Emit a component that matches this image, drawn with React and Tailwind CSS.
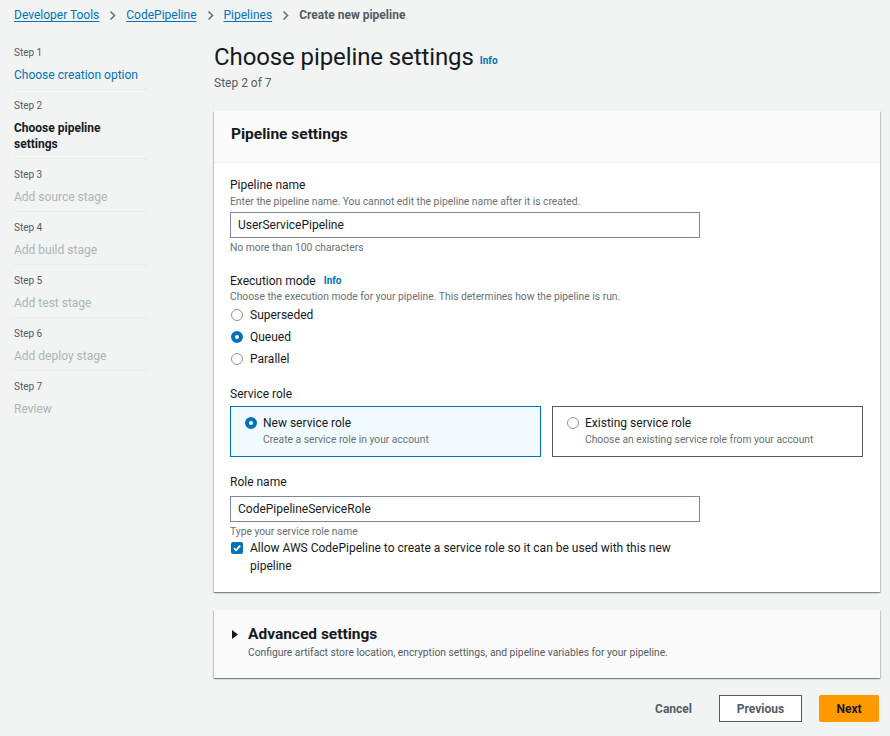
import React from "react"

const cardShadow =
  "shadow-[0_1px_1px_0_rgba(0,28,36,0.3),1px_1px_1px_0_rgba(0,28,36,0.15),-1px_1px_1px_0_rgba(0,28,36,0.15)]"

const Chevron = () => (
  <svg width="7" height="11" viewBox="0 0 7 11" className="mx-[10px]">
    <path d="M1.5 1.5 L5.5 5.5 L1.5 9.5" fill="none" stroke="#687078" strokeWidth="1.6" />
  </svg>
)

const steps = [
  { n: 1, label: "Choose creation option", state: "done" },
  { n: 2, label: "Choose pipeline settings", state: "current" },
  { n: 3, label: "Add source stage", state: "todo" },
  { n: 4, label: "Add build stage", state: "todo" },
  { n: 5, label: "Add test stage", state: "todo" },
  { n: 6, label: "Add deploy stage", state: "todo" },
  { n: 7, label: "Review", state: "todo" },
]

const Radio = ({ checked }) =>
  checked ? (
    <span className="w-3 h-3 rounded-full border-[4px] border-[#0073bb] bg-white shrink-0" />
  ) : (
    <span className="w-3 h-3 rounded-full border border-[#8d9696] bg-white shrink-0" />
  )

const App = () => {
  return (
    <div className="min-h-screen bg-[#f2f3f3] pl-[14px] pr-[10px] font-['Roboto',sans-serif] text-[#16191f]">
      {/* Breadcrumb */}
      <div className="h-[30px] flex items-center text-[12px]">
        <a className="text-[#0073bb] underline underline-offset-2">Developer Tools</a>
        <Chevron />
        <a className="text-[#0073bb] underline underline-offset-2">CodePipeline</a>
        <Chevron />
        <a className="text-[#0073bb] underline underline-offset-2">Pipelines</a>
        <Chevron />
        <span className="text-[#545b64] font-bold">Create new pipeline</span>
      </div>

      <div className="flex">
        {/* Steps nav */}
        <nav className="w-[133px] mt-[7px] shrink-0">
          {steps.map((s, i) => (
            <div
              key={s.n}
              className={`pt-[8px] pb-[6px] ${i < steps.length - 1 ? "border-b border-[#e9ebed]" : ""}`}
            >
              <div className="text-[10px] leading-4 text-[#545b64]">Step {s.n}</div>
              <div
                className={`mt-[6px] text-[12px] leading-4 ${
                  s.state === "done"
                    ? "text-[#0073bb]"
                    : s.state === "current"
                    ? "font-bold text-[#16191f]"
                    : "text-[#aab7b8]"
                }`}
              >
                {s.label}
              </div>
            </div>
          ))}
        </nav>

        {/* Main */}
        <main className="ml-[67px] w-[666px] shrink-0 mt-[11px]">
          <div className="flex items-center h-[32px]">
            <h1 className="text-[24px] leading-8 font-normal tracking-[-0.1px]">Choose pipeline settings</h1>
            <span className="ml-[6px] mt-[6px] text-[10px] font-bold text-[#0073bb]">Info</span>
          </div>
          <div className="mt-[1px] text-[12px] leading-[18px] text-[#545b64]">Step 2 of 7</div>

          {/* Pipeline settings card */}
          <section className={`mt-[19px] bg-white ${cardShadow}`}>
            <div className="h-[52px] pt-[13px] px-[17px] bg-[#fafafa] border-b border-[#eaeded]">
              <h2 className="text-[15.5px] leading-5 font-bold">Pipeline settings</h2>
            </div>
            <div className="px-[16px] pt-[13px] pb-[17px]">
              <div className="text-[12px] leading-[18px]">Pipeline name</div>
              <div className="text-[10.3px] leading-4 text-[#687078]">
                Enter the pipeline name. You cannot edit the pipeline name after it is created.
              </div>
              <div className="mt-[2px] w-[470px] h-[26px] border border-[#7d8998] bg-white flex items-center px-[7px] text-[12px]">
                UserServicePipeline
              </div>
              <div className="mt-[2px] text-[10.3px] leading-4 text-[#687078]">No more than 100 characters</div>

              <div className="mt-[16px] flex items-center text-[12px] leading-[18px]">
                Execution mode
                <span className="ml-[8px] text-[10px] font-bold text-[#0073bb]">Info</span>
              </div>
              <div className="text-[10.3px] leading-[14px] text-[#687078]">
                Choose the execution mode for your pipeline. This determines how the pipeline is run.
              </div>
              <div>
                {["Superseded", "Queued", "Parallel"].map((m) => (
                  <label key={m} className="h-[22px] flex items-center gap-[7px] pl-[1px] text-[12px]">
                    <Radio checked={m === "Queued"} />
                    {m}
                  </label>
                ))}
              </div>

              <div className="mt-[15px] text-[12px] leading-[18px]">Service role</div>
              <div className="mt-[3px] grid grid-cols-2 gap-[11px] pr-[1px]">
                <div className="h-[51px] border border-[#0073bb] bg-[#f1faff] pl-[14px] pt-[7px] flex gap-[6px]">
                  <div className="h-[18px] flex items-center">
                    <Radio checked />
                  </div>
                  <div>
                    <div className="text-[12px] leading-[18px]">New service role</div>
                    <div className="text-[10.3px] leading-4 text-[#687078]">Create a service role in your account</div>
                  </div>
                </div>
                <div className="h-[51px] border border-[#545b64] bg-white pl-[14px] pt-[7px] flex gap-[6px]">
                  <div className="h-[18px] flex items-center">
                    <Radio />
                  </div>
                  <div>
                    <div className="text-[12px] leading-[18px]">Existing service role</div>
                    <div className="text-[10.3px] leading-4 text-[#687078]">
                      Choose an existing service role from your account
                    </div>
                  </div>
                </div>
              </div>

              <div className="mt-[16px] text-[12px] leading-[18px]">Role name</div>
              <div className="mt-[5px] w-[470px] h-[26px] border border-[#7d8998] bg-white flex items-center px-[7px] text-[12px]">
                CodePipelineServiceRole
              </div>
              <div className="mt-[3px] text-[10.3px] leading-[14px] text-[#687078]">Type your service role name</div>
              <div className="flex gap-[7px] pl-[1px]">
                <div className="h-[18px] flex items-center">
                  <span className="w-[12px] h-[12px] rounded-[2px] bg-[#0073bb] flex items-center justify-center">
                    <svg width="10" height="10" viewBox="0 0 10 10">
                      <path d="M2 5.2 L4.1 7.3 L8.2 2.7" fill="none" stroke="white" strokeWidth="1.8" />
                    </svg>
                  </span>
                </div>
                <div className="text-[12px] leading-[18px]">
                  Allow AWS CodePipeline to create a service role so it can be used with this new
                  <br />
                  pipeline
                </div>
              </div>
            </div>
          </section>

          {/* Advanced settings */}
          <section className={`mt-[18px] bg-[#fafafa] px-[18px] pt-[14px] pb-[17px] ${cardShadow}`}>
            <div className="flex items-center h-5 gap-[10px]">
              <svg width="6" height="9" viewBox="0 0 6 9">
                <path d="M0 0 L6 4.5 L0 9 Z" fill="#16191f" />
              </svg>
              <h2 className="text-[15.5px] leading-5 font-bold">Advanced settings</h2>
            </div>
            <div className="pl-[16px] text-[10.3px] leading-4 text-[#545b64] mt-[1px]">
              Configure artifact store location, encryption settings, and pipeline variables for your pipeline.
            </div>
          </section>

          {/* Actions */}
          <div className="mt-[17px] flex justify-end items-center gap-[17px] pr-[1px]">
            <button className="h-[27px] px-[10px] text-[12px] font-bold text-[#545b64]">Cancel</button>
            <button className="h-[27px] w-[83px] border border-[#545b64] bg-white text-[12px] font-bold text-[#545b64]">
              Previous
            </button>
            <button className="h-[27px] w-[60px] rounded-[2px] bg-[#ff9900] text-[12px] font-bold text-[#16191f]">
              Next
            </button>
          </div>
        </main>
      </div>
    </div>
  )
}

export default App
